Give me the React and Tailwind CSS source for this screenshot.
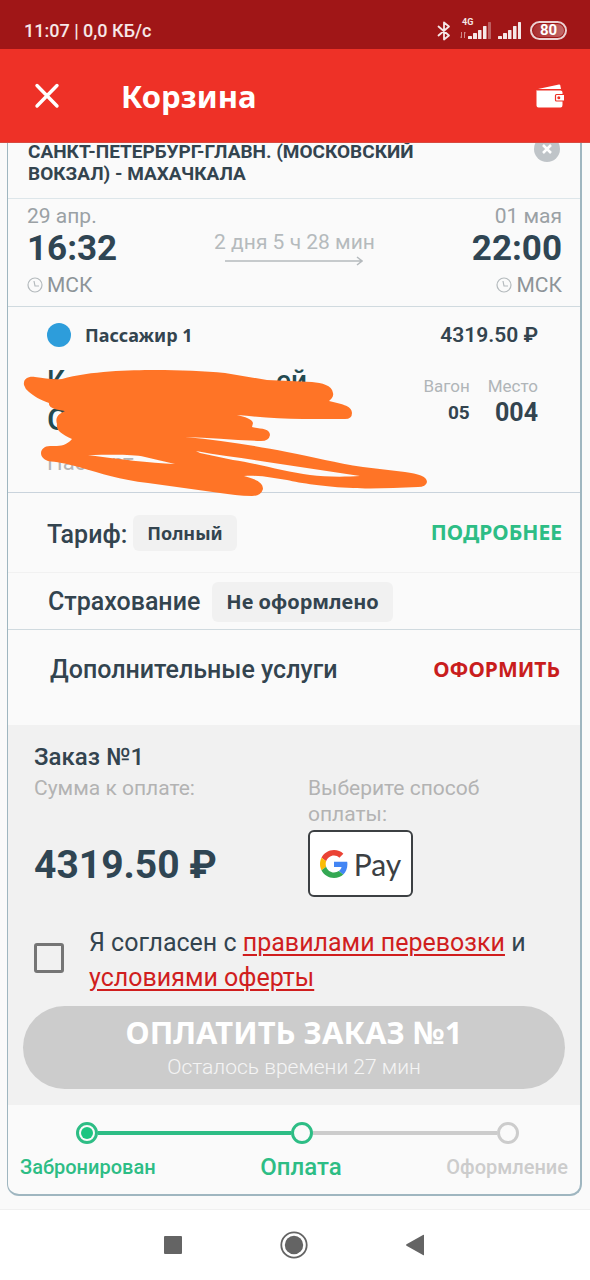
import React from 'react';

function cx(...parts) {
  return parts.filter(Boolean).join(' ');
}

const display = "font-['Noto_Sans',sans-serif] font-bold";

function Signal({ weak }) {
  return (
    <svg width="24" height="18" viewBox="0 0 24 18" fill="#fff" className="opacity-90" aria-hidden="true">
      <rect x="0" y="14" width="4" height="3" rx=".6" />
      <rect x="5" y="11" width="4" height="6" rx=".6" />
      <rect x="10" y="8" width="3.500" height="9" rx=".6" />
      <rect x="15" y="4" width="3.500" height="13" rx=".6" />
      <rect x="20" y="0" width="3" height="17" rx=".6" opacity={weak ? 0.35 : 1} />
    </svg>
  );
}

function StatusBar() {
  return (
    <div className="flex h-[49px] items-center justify-between bg-[#a01617] pt-3 pr-[23px] pl-6 text-white/90">
      <div className="text-[18px] leading-6 font-medium">11:07 | 0,0 КБ/с</div>
      <div className="flex items-center">
        <svg width="14" height="20" viewBox="0 0 14 20" fill="none" stroke="currentColor" strokeWidth="1.800" aria-hidden="true">
          <path d="M1.500 5.500 L12 14.500 L7 18.500 V1.500 L12 5.500 L1.500 14.500" strokeLinejoin="round" strokeLinecap="round" />
        </svg>
        <div className="relative ml-[17px]">
          <span className="absolute -top-[6px] -left-[6px] text-[9px] leading-3 font-bold">4G</span>
          <svg className="absolute top-[9px] -left-2" width="6" height="8" viewBox="0 0 6 8" stroke="#fff" fill="none" opacity=".5" aria-hidden="true">
            <path d="M1.500 1 V7 L0 5.500 M4.500 7 V1 L6 2.500" />
          </svg>
          <Signal weak />
        </div>
        <div className="ml-[6px]"><Signal /></div>
        <div className="ml-2 flex h-[19px] w-[37px] items-center rounded-full border-2 border-white/80 p-px">
          <span className="flex h-full w-full items-center justify-center rounded-full bg-linear-to-r from-white/10 to-white/35 text-[15px] font-bold text-white">80</span>
        </div>
      </div>
    </div>
  );
}

function AppBar() {
  return (
    <header className="relative z-10 flex h-[94px] items-center border-b border-[#d84a40] bg-[#ee3127] px-[26px] text-white">
      <button aria-label="Закрыть" className="p-2">
        <svg width="26" height="26" viewBox="0 0 26 26" stroke="currentColor" strokeWidth="3.400" strokeLinecap="round" aria-hidden="true">
          <path d="M3 2.500 L23 23 M23 2.500 L3 23" />
        </svg>
      </button>
      <h1 className={cx(display, 'ml-[53px] flex-1 text-[31px] leading-10')}>Корзина</h1>
      <button aria-label="Кошелёк">
        <svg width="28" height="24" viewBox="0 0 28 24" aria-hidden="true">
          <path d="M2 5 L23 0.500 Q24 0.300 24.300 1.500 L25 5 Z" fill="#fff" />
          <path d="M2 6.500 H24.500 Q26.500 6.500 26.500 8.500 V21 Q26.500 23.500 24.500 23.500 H2.500 Q0.500 23.500 0.500 21.500 V6 Q0.800 6.500 2 6.500 Z" fill="#fff" />
          <path d="M28 10.500 H20.500 Q19.500 10.500 19.500 11.500 V16 Q19.500 17 20.500 17 H28" fill="#fff" stroke="#ee3127" strokeWidth="1.200" />
          <circle cx="22.800" cy="13.800" r="1.500" fill="#ee3127" />
        </svg>
      </button>
    </header>
  );
}

function Clock() {
  return (
    <svg width="16" height="16" viewBox="0 0 16 16" fill="none" stroke="#b4babd" strokeWidth="1.200" aria-hidden="true">
      <circle cx="8" cy="8" r="7" />
      <path d="M7 4 L8 9 H12" />
    </svg>
  );
}

function Stop({ date, time, end }) {
  return (
    <div className={cx('flex flex-col', end && 'items-end')}>
      <div className="text-[21px] leading-[26px] text-[#9aa1a5]">{date}</div>
      <div className="text-[35px] leading-10 font-bold text-[#2f4553]">{time}</div>
      <div className="flex items-center gap-1 text-[21px] leading-8 text-[#8d9498]">
        <Clock />
        МСК
      </div>
    </div>
  );
}

function Trip() {
  return (
    <section className="flex justify-between border-b border-[#d0dadf] pt-1 pr-[18px] pb-[5px] pl-[19px]">
      <Stop date="29 апр." time="16:32" />
      <div className="flex flex-col items-center pt-[25px] text-[21px] leading-7 text-[#b5babd]">
        2 дня 5 ч 28 мин
        <svg width="138" height="10" viewBox="0 0 138 10" fill="none" stroke="#b5babd" strokeWidth="1.500" aria-hidden="true">
          <path d="M0 5 H136 M132 1 L137 5 L132 9" />
        </svg>
      </div>
      <Stop date="01 мая" time="22:00" end />
    </section>
  );
}

function Scribble() {
  return (
    <svg className="absolute top-[60px] left-2" width="420" height="135" viewBox="16 367 420 135" fill="#ff7426" aria-hidden="true">
      <path
        fillRule="evenodd"
        d="M24 385 C23 379 28 376 35 377 C45 378 52 380 62 379 C90 371 130 370 155 370 C180 370 205 371 225 373 L267 380 L312 382 C322 383 332 385 333 393 C334 397 331 399 329 401 C340 404 352 405 352 413 Q352 419 345 419 H303 C280 419 260 417 237 415 C245 417 252 419 253 423 L252 427 C261 429 270 428 270 435 Q269 441 261 441 C235 440 210 438 185 437 C220 440 250 445 287 452 C315 457 335 463 363 467 L405 472 C418 474 427 476 427 482 Q426 487 418 487 C395 488 370 489 353 488 C325 487 300 483 287 480 C273 478 260 475 244 476 C255 479 263 482 263 489 Q261 496 252 496 C240 496 230 494 220 493 L148 483 C120 480 100 473 82 468 C65 463 56 462 48 461 C37 457 40 446 50 446 C58 446 65 447 72 439 C60 433 56 430 57 424 C55 418 58 414 65 411 C57 410 48 408 49 403 C40 400 34 396 29 392 Q25 389 24 385 Z
          M88 455 C110 455 132 454 145 457 L175 464 C150 463 117 459 88 455 Z
          M196 451 C220 456 245 458 267 462 L360 476 C345 477 325 477 310 475 C285 472 255 463 233 460 L200 453 Z"
      />
    </svg>
  );
}

function Seat({ label, children }) {
  return (
    <div className="flex flex-col items-end">
      <span className="text-[17px] leading-[26px] text-[#b0b5b8]">{label}</span>
      {children}
    </div>
  );
}

function Passenger() {
  return (
    <section className="relative h-[186px] border-b border-[#c9d3dc] pr-[42px] pl-[39px] text-[#33444f]">
      <div className="flex items-center justify-between pt-4 leading-6">
        <div className="flex items-center gap-[14px]">
          <span className="h-6 w-6 rounded-full bg-[#2d9ddb]" />
          <span className={cx(display, 'text-[18px]')}>Пассажир 1</span>
        </div>
        <span className="text-[21px] font-semibold">4319.50 ₽</span>
      </div>
      <div className="flex justify-between pt-4">
        <div>
          <div className="flex w-[260px] justify-between text-[28px] leading-9 font-medium text-[#234a50]">
            <span>К</span>
            <span>ей</span>
          </div>
          <div className="text-[32px] leading-10 font-medium text-[#234a50]">С</div>
          <div className="pt-1 text-[22px] leading-10 text-[#b5b5b5]">Паспорт</div>
        </div>
        <div className="flex gap-[18px] pt-[10px]">
          <Seat label="Вагон">
            <span className="text-[19px] leading-7 font-bold">05</span>
          </Seat>
          <Seat label="Место">
            <span className="text-[25px] leading-7 font-bold">004</span>
          </Seat>
        </div>
      </div>
      <Scribble />
    </section>
  );
}

function Options() {
  return (
    <div className="text-[25px] font-medium text-[#33444f]">
      <section className="flex h-20 items-center justify-between border-b border-[#f1f1f1] pr-[18px] pl-[39px]">
        <div className="flex items-center gap-[6px]">
          <span className="pt-1">Тариф:</span>
          <span className={cx(display, 'rounded-md bg-[#f1f1f1] px-[14px] text-[18px] leading-9')}>Полный</span>
        </div>
        <a href="#details" className={cx(display, 'text-[21px] text-[#2dbd85]')}>ПОДРОБНЕЕ</a>
      </section>
      <section className="flex h-[57px] items-center gap-3 border-b border-[#d0dadf] pt-[2px] pr-[18px] pl-10">
        <span>Страхование</span>
        <span className={cx(display, 'rounded-md bg-[#f1f1f1] px-[14px] text-[20px] leading-10')}>Не оформлено</span>
      </section>
      <section className="flex h-[95px] items-center justify-between pr-[20px] pb-4 pl-[42px]">
        <span>Дополнительные услуги</span>
        <a href="#services" className={cx(display, 'text-[21px] text-[#c91d1d]')}>ОФОРМИТЬ</a>
      </section>
    </div>
  );
}

function GPay() {
  return (
    <button aria-label="Google Pay" className="flex h-[67px] w-[105px] items-center justify-center gap-[6px] rounded-md border-2 border-[#3c4043] bg-white">
      <svg width="28" height="28" viewBox="0 0 48 48" aria-hidden="true">
        <path fill="#EA4335" d="M24 9.500c3.540 0 6.710 1.220 9.210 3.600l6.850-6.850C35.900 2.380 30.470 0 24 0 14.620 0 6.510 5.380 2.560 13.220l7.980 6.190C12.430 13.720 17.740 9.500 24 9.500z" />
        <path fill="#4285F4" d="M46.980 24.550c0-1.570-.15-3.090-.38-4.550H24v9.020h12.940c-.58 2.960-2.260 5.480-4.780 7.180l7.730 6c4.510-4.180 7.090-10.360 7.090-17.650z" />
        <path fill="#FBBC05" d="M10.530 28.590c-.48-1.450-.76-2.990-.76-4.590s.27-3.140.76-4.590l-7.980-6.190C.92 16.460 0 20.120 0 24c0 3.880.92 7.540 2.560 10.780l7.970-6.190z" />
        <path fill="#34A853" d="M24 48c6.480 0 11.930-2.130 15.890-5.810l-7.730-6c-2.150 1.450-4.920 2.300-8.160 2.300-6.260 0-11.570-4.220-13.470-9.910l-7.980 6.190C6.510 42.620 14.620 48 24 48z" />
      </svg>
      <span className="font-['Lato',sans-serif] text-[30px] leading-10 text-[#3c4043]">Pay</span>
    </button>
  );
}

function Order() {
  return (
    <section className="bg-[#f1f1f1] px-[15px] py-4">
      <div className="flex px-[11px]">
        <div className="w-[274px]">
          <h2 className="text-[24px] leading-8 font-medium text-[#33444f]">Заказ №1</h2>
          <p className="pt-[2px] text-[21px] leading-[26px] text-[#b3b3b3]">Сумма к оплате:</p>
          <p className="pt-10 text-[39px] leading-[48px] font-bold text-[#2f4553]">4319.50 ₽</p>
        </div>
        <div className="flex-1 pt-[34px]">
          <p className="w-[200px] text-[21px] leading-[26px] text-[#b3b3b3]">Выберите способ оплаты:</p>
          <div className="pt-[3px]"><GPay /></div>
        </div>
      </div>
      <div className="flex items-start gap-[25px] px-[11px] pt-7 text-[25px] leading-[35px] text-[#33444f]">
        <input
          id="agree"
          type="checkbox"
          className="mt-[18px] h-[30px] w-[30px] shrink-0 appearance-none rounded-[3px] border-3 border-[#757575] checked:bg-[#757575]"
        />
        <label htmlFor="agree">
          Я согласен с{' '}
          <a href="#rules" className="text-[#d01e1e] underline decoration-2 underline-offset-3">правилами перевозки</a> и{' '}
          <a href="#offer" className="text-[#d01e1e] underline decoration-2 underline-offset-3">условиями оферты</a>
        </label>
      </div>
      <button className="mt-[11px] flex h-[83px] w-full flex-col items-center justify-center rounded-full bg-[#ccc] text-white">
        <span className={cx(display, 'pt-px text-[31px] leading-9')}>ОПЛАТИТЬ ЗАКАЗ №1</span>
        <span className="pt-px text-[21px] leading-8 font-light text-white/80">Осталось времени 27 мин</span>
      </button>
    </section>
  );
}

function Steps() {
  return (
    <section className="px-3 pt-[17px] pb-[11px]">
      <div className="flex items-center pr-[49px] pl-14">
        <span className="flex h-[22px] w-[22px] items-center justify-center rounded-full border-3 border-[#2dbd85]">
          <span className="h-3 w-3 rounded-full bg-[#1cc581]" />
        </span>
        <span className="h-1 grow-[21] bg-[#2dbd85]" />
        <span className="h-[22px] w-[22px] rounded-full border-3 border-[#2dbd85]" />
        <span className="h-1 grow-[20] bg-[#ccc]" />
        <span className="h-[22px] w-[22px] rounded-full border-3 border-[#ccc]" />
      </div>
      <div className="flex items-center justify-between pt-[7px] text-[20px] leading-8 font-medium">
        <span className="text-[#2dbd85]">Забронирован</span>
        <span className="text-[24px] text-[#2dbd85]">Оплата</span>
        <span className="text-[#ccc]">Оформление</span>
      </div>
    </section>
  );
}

function NavBar() {
  return (
    <nav className="flex flex-1 items-center justify-center gap-[97px] border-t border-[#f0f0f0] bg-white pr-[2px] text-[#646464]">
      <button aria-label="Недавние">
        <svg width="20" height="20" viewBox="0 0 20 20" fill="currentColor"><rect x="1" y="1" width="18" height="18" rx="1" /></svg>
      </button>
      <button aria-label="Домой">
        <svg width="28" height="28" viewBox="0 0 28 28" fill="currentColor">
          <circle cx="14" cy="14" r="12.700" fill="none" stroke="currentColor" strokeWidth="1.800" />
          <circle cx="14" cy="14" r="9.200" />
        </svg>
      </button>
      <button aria-label="Назад">
        <svg width="20" height="22" viewBox="0 0 20 22" fill="currentColor"><path d="M19 1 V21 Q18.500 21.500 18 21 L1.500 11.800 Q0.500 11 1.500 10.200 L18 1 Q18.500 0.500 19 1 Z" /></svg>
      </button>
    </nav>
  );
}

export default function App() {
  return (
    <div className="flex min-h-screen flex-col bg-[#fafafa] font-[Roboto,sans-serif]">
      <StatusBar />
      <AppBar />
      <main className="-mt-3 pr-2 pb-[13px] pl-[7px]">
        <article className="rounded-b-xl border-r-2 border-b-2 border-l border-[#9fb6c0] bg-[#fafafa]">
          <div className="flex items-start justify-between border-b border-[#dde6ea] pt-[10px] pr-5 pb-[13px] pl-5">
            <h2 className="w-[420px] text-[19px] leading-[22px] font-bold text-[#33444f]">
              САНКТ-ПЕТЕРБУРГ-ГЛАВН. (МОСКОВСКИЙ ВОКЗАЛ) - МАХАЧКАЛА
            </h2>
            <button aria-label="Удалить" className="-mt-[5px]">
              <svg width="26" height="26" viewBox="0 0 26 26" aria-hidden="true">
                <circle cx="13" cy="13" r="13" fill="#bfc4c8" />
                <path d="M9 9 L17 17 M17 9 L9 17" stroke="#fff" strokeWidth="2.500" />
              </svg>
            </button>
          </div>
          <Trip />
          <Passenger />
          <Options />
          <Order />
          <Steps />
        </article>
      </main>
      <NavBar />
    </div>
  );
}
